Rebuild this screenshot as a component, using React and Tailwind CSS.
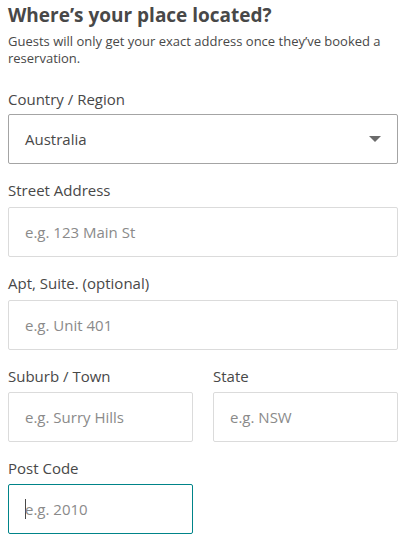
import React from 'react';

const Field = ({ label, placeholder, tight = false, focused = false }) => (
  <div>
    <label
      className={`block text-[15px] text-[#484848] pt-[16px] leading-[20px] ${tight ? 'h-[42px]' : 'h-[43px]'}`}
    >
      {label}
    </label>
    <div
      className={`h-[50px] border rounded-[2px] flex items-center px-4 text-[15px] ${
        focused ? 'border-[#008489]' : 'border-[#dbdbdb]'
      }`}
    >
      {focused && <span className="w-px h-[20px] bg-[#484848] -mr-px"></span>}
      <span className="text-[#8a8a8a]">{placeholder}</span>
    </div>
  </div>
);

export default function App() {
  return (
    <div className="w-[407px] h-[543px] bg-white pl-2 pr-[9px] overflow-hidden" style={{ fontFamily: '"Open Sans", sans-serif' }}>
      <h1 className="text-[19px] font-bold text-[#484848] leading-[24px] pt-[3px]">Where’s your place located?</h1>
      <p className="text-[13px] text-[#484848] leading-[17px] mt-[6px]">
        Guests will only get your exact address once they’ve booked a reservation.
      </p>

      <div className="mt-[4px]">
        <label className="block text-[15px] text-[#484848] h-[43px] pt-[18px] leading-[20px]">Country / Region</label>
        <div className="h-[50px] border border-[#a4a4a4] rounded-[2px] flex items-center justify-between pl-4 pr-4 text-[15px] text-[#484848]">
          <span>Australia</span>
          <svg width="12" height="6" viewBox="0 0 12 6">
            <path d="M0 0h12L6 6z" fill="#6b6b6b" />
          </svg>
        </div>
      </div>

      <Field label="Street Address" placeholder="e.g. 123 Main St" />
      <Field label="Apt, Suite. (optional)" placeholder="e.g. Unit 401" />

      <div className="grid grid-cols-2 gap-5">
        <Field label="Suburb / Town" placeholder="e.g. Surry Hills" tight />
        <Field label="State" placeholder="e.g. NSW" tight />
      </div>

      <div className="grid grid-cols-2 gap-5">
        <Field label="Post Code" placeholder="e.g. 2010" tight focused />
      </div>
    </div>
  );
}
